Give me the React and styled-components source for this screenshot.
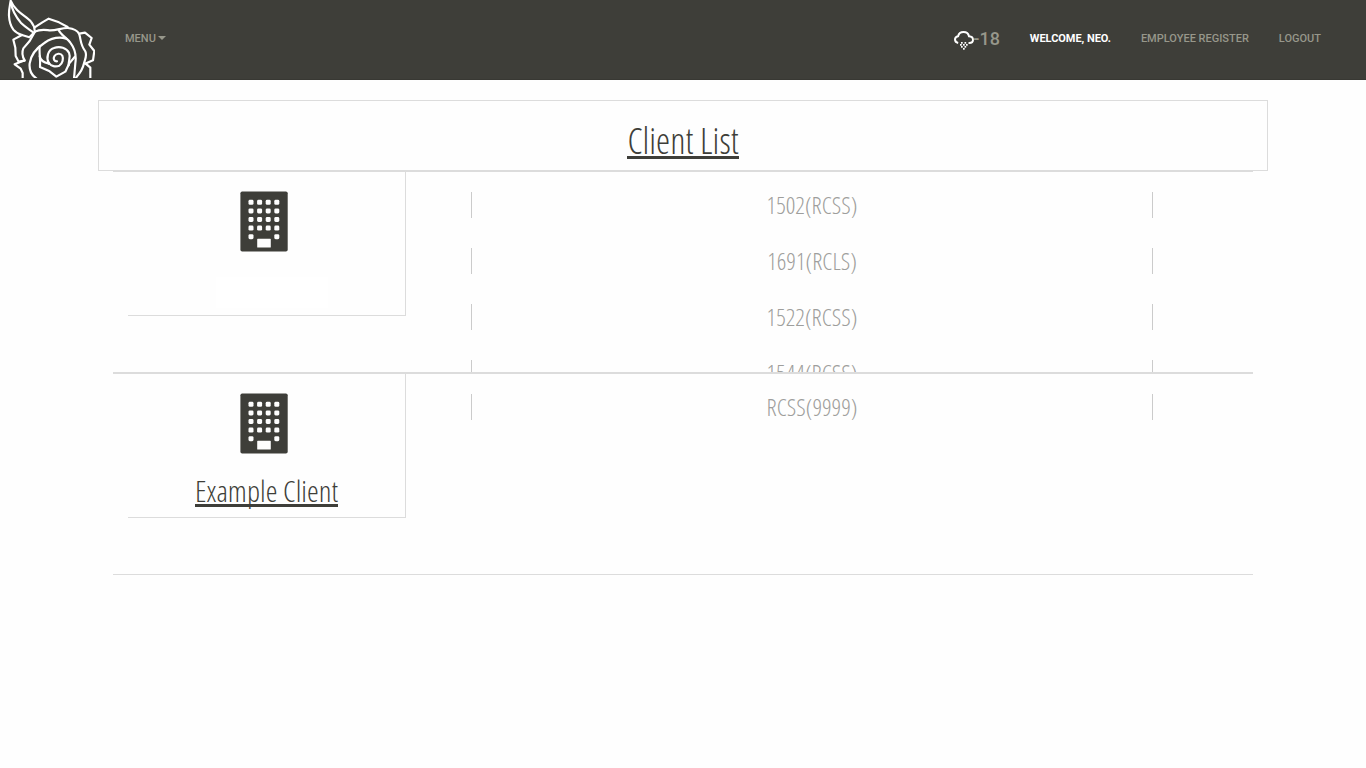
import React from "react";
import styled, { createGlobalStyle } from "styled-components";

const GlobalStyle = createGlobalStyle`
  * { box-sizing: border-box; }
  body { margin: 0; background: #fefefe; font-family: Roboto, "Liberation Sans", sans-serif; }
`;

const condensed = `"Open Sans Condensed Light", "Open Sans", sans-serif`;

const Navbar = styled.nav`
  display: flex;
  height: 80px;
  background: #3e3e39;
  border-bottom: 1px solid #383833;
`;

const Logo = styled.svg`
  display: block;
  width: 95px;
  height: 78px;
  flex: none;
`;

const NavGroup = styled.div`
  display: flex;
  align-items: flex-start;
  padding-top: 28px;
  gap: 30px;
  margin-left: ${(p) => (p.$end ? "auto" : "30px")};
  padding-right: ${(p) => (p.$end ? "45px" : "0")};
`;

const NavLink = styled.a`
  display: flex;
  align-items: center;
  height: 20px;
  font-size: 11px;
  font-weight: ${(p) => (p.$active ? 700 : 500)};
  letter-spacing: ${(p) => p.$track || "0"};
  color: ${(p) => (p.$active ? "#fff" : "#97978b")};
  white-space: nowrap;
`;

const Caret = styled.span`
  margin-left: 2px;
  border: 4px solid transparent;
  border-top-color: currentColor;
  border-bottom: 0;
`;

const Weather = styled.div`
  display: flex;
  align-items: center;
  height: 20px;
  font-size: 18px;
  font-weight: 500;
  color: #97978b;
`;

const WeatherIcon = styled.svg`
  width: 22px;
  height: 22px;
  margin: 4px -2px 0 0;
`;

const Container = styled.main`
  width: 1170px;
  margin: 20px auto 0;
`;

const TitleBox = styled.header`
  height: 71px;
  border: 1px solid #dcdcdc;
  text-align: center;
  padding-top: 20px;
`;

const Underlined = styled.span`
  display: inline-block;
  margin: 0;
  font-family: ${condensed};
  font-weight: 300;
  font-size: ${(p) => p.$size}px;
  line-height: ${(p) => p.$line}px;
  height: ${(p) => p.$height}px;
  color: #3e3e39;
  white-space: nowrap;
  border-bottom: 3px solid #3e3e39;
`;

const List = styled.section`
  padding: 0 15px;
`;

const Row = styled.article`
  display: flex;
  height: 202px;
  padding-left: 15px;
  overflow: hidden;
  border: solid #dcdcdc;
  border-width: 1px 0;
`;

const ClientCard = styled.div`
  display: flex;
  flex-direction: column;
  align-items: center;
  width: 278px;
  height: 144px;
  flex: none;
  padding-top: 19px;
  border: solid #dcdcdc;
  border-width: 0 1px 1px 0;
`;

const Building = styled.svg`
  display: block;
  width: 48px;
  height: 61px;
  margin-right: 5px;
  flex: none;
`;

const BlankName = styled.div`
  width: 112px;
  height: 31px;
  margin: 25px 0 0 11px;
  background: #fff;
`;

const ClientName = styled.div`
  margin-top: 20px;
`;

const Stores = styled.div`
  display: flex;
  flex-direction: column;
  gap: 30px;
  width: 682px;
  margin-left: 65px;
  padding-top: 20px;
`;

const Store = styled.div`
  flex: none;
  height: 26px;
  border: solid #cbcbcb;
  border-width: 0 1px;
  text-align: center;
  font-family: ${condensed};
  font-weight: 300;
  font-size: 24px;
  line-height: 26px;
  color: #9e9e9c;
`;

function Rose() {
  return (
    <Logo viewBox="0 0 285 234" fill="none" stroke="#fff" strokeWidth="6.5" strokeLinejoin="round" strokeLinecap="round">
      <path d="M32 2C30 15 26 30 27 48C28 65 32 78 40 89C48 99 56 102 66 105L88 112L104 96C105 86 101 75 93 65C84 53 66 45 52 31C43 22 36 12 32 2Z" />
      <path d="M33 8C36 32 46 49 64 70C78 84 94 91 102 99" />
      <path d="M104 82L127 67L146 56L177 67L203 81" />
      <path d="M105 95C121 86 137 90 151 91C171 91 187 83 204 84C219 86 232 91 237 101C243 116 240 134 256 154C262 168 254 181 252 190C248 210 239 221 228 233" />
      <path d="M104 97L89 123L70 145C65 157 66 168 74 181" />
      <path d="M66 105L40 119L46 143L47 168L56 185L74 182" />
      <path d="M70 182L44 193L62 206L68 219V235" />
      <path d="M176 90C183 106 201 114 211 128C226 148 229 171 226 190L222 235" />
      <path d="M238 101L255 98L275 114L268 134L283 153L279 181L255 191" />
      <path d="M257 191L271 203V235" />
      <path d="M199 116C178 110 153 115 133 129C113 142 93 162 89 190C87 209 94 225 109 235" />
      <path d="M119 139C117 158 122 178 120 201L149 214L169 230L196 215L208 190L224 171" />
      <path d="M119 168C121 182 132 188 147 191" />
      <path d="M147 191C137 172 144 150 162 144C180 137 200 144 207 158C213 171 205 183 206 196" />
      <path d="M147 189C153 199 167 201 178 197C188 191 191 176 187 167C182 158 168 160 163 169C159 176 162 184 171 184" />
    </Logo>
  );
}

function SnowCloud() {
  const flakes = [[8, 14], [11.5, 14], [7, 16], [10, 16], [13, 16], [8, 18], [11.5, 18], [10, 20]];
  return (
    <WeatherIcon viewBox="0 0 22 22">
      <path d="M5.2 14C3.2 13.6 2 12.4 2 10.6C2 8.7 3.3 7.5 5.1 7.2C5.7 4.5 7.9 3 10.5 3C13.2 3 15.4 4.5 16 7.2C18.2 7.4 20 8.7 20 10.8C20 12.8 18.5 14 16.2 14H15.5" fill="none" stroke="#fff" strokeWidth="2" />
      {flakes.map(([x, y]) => (
        <rect key={`${x}-${y}`} x={x} y={y - 1} width="1.7" height="1.7" fill="#fff" />
      ))}
    </WeatherIcon>
  );
}

function BuildingIcon() {
  const windows = [];
  for (let r = 0; r < 5; r++)
    for (let c = 0; c < 4; c++)
      if (r < 4 || c === 0 || c === 3) windows.push([8.5 + c * 8.6, 8.8 + r * 8.6]);
  return (
    <Building viewBox="0 0 48 61">
      <rect x="0.4" y="0.5" width="47.3" height="60" rx="1.8" fill="#3e3e39" />
      {windows.map(([x, y]) => (
        <rect key={`${x}-${y}`} x={x} y={y} width="5" height="5" rx="1.4" fill="#fefefe" />
      ))}
      <rect x="17.2" y="47.8" width="13.6" height="8.8" rx="0.6" fill="#fefefe" />
    </Building>
  );
}

const clients = [
  { name: "", stores: ["1502(RCSS)", "1691(RCLS)", "1522(RCSS)", "1544(RCSS)"] },
  { name: "Example Client", stores: ["RCSS(9999)"] },
];

export default function App() {
  return (
    <>
      <GlobalStyle />
      <Navbar>
        <Rose />
        <NavGroup>
          <NavLink>MENU<Caret /></NavLink>
        </NavGroup>
        <NavGroup $end>
          <Weather><SnowCloud />-18</Weather>
          <NavLink $active $track="-0.04px">WELCOME, NEO.</NavLink>
          <NavLink>EMPLOYEE REGISTER</NavLink>
          <NavLink>LOGOUT</NavLink>
        </NavGroup>
      </Navbar>
      <Container>
        <TitleBox>
          <Underlined as="h1" $size={36} $line={40} $height={38}>Client List</Underlined>
        </TitleBox>
        <List>
          {clients.map((client) => (
            <Row key={client.stores[0]}>
              <ClientCard>
                <BuildingIcon />
                {client.name ? (
                  <ClientName>
                    <Underlined $size={30} $line={34} $height={33}>{client.name}</Underlined>
                  </ClientName>
                ) : <BlankName />}
              </ClientCard>
              <Stores>
                {client.stores.map((s) => <Store key={s}>{s}</Store>)}
              </Stores>
            </Row>
          ))}
        </List>
      </Container>
    </>
  );
}
